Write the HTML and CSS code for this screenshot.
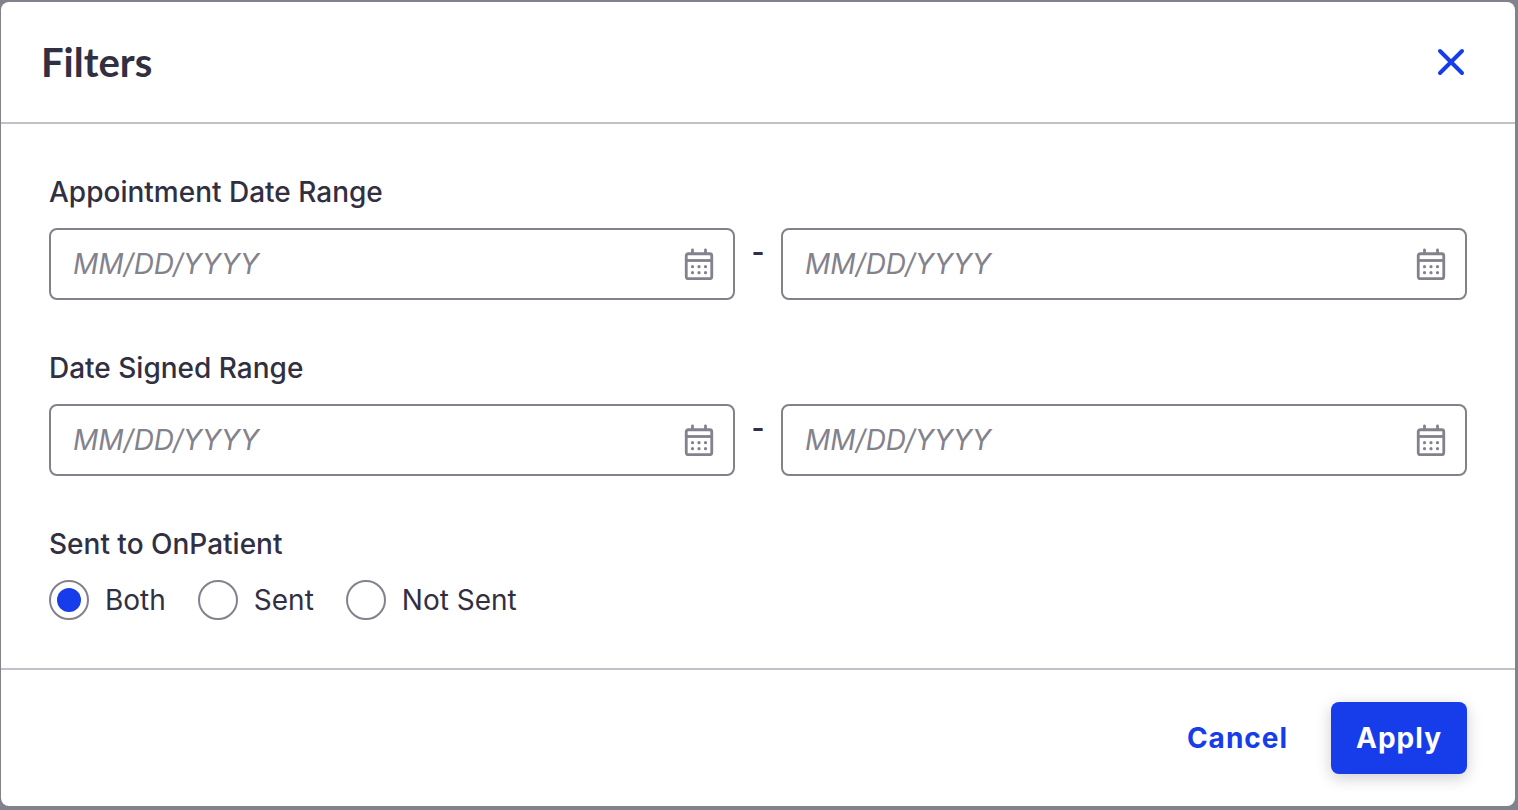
FILE: index.html
```html
<!DOCTYPE html>
<html lang="en">
<head>
    <meta charset="UTF-8">
    <meta name="viewport" content="width=device-width, initial-scale=1">
    <title>Filters</title>
    <link rel="stylesheet" href="styles.css">
</head>
<body>

    <!-- Shared calendar icon -->
    <svg class="sprite" aria-hidden="true">
        <symbol id="icon-calendar" viewBox="0 0 32 32">
            <rect x="3.25" y="5.75" width="25.5" height="25" rx="2" fill="none" stroke="currentColor" stroke-width="2.8"/>
            <path d="M3 12.5h26" fill="none" stroke="currentColor" stroke-width="2.8"/>
            <path d="M9.5 5V1.8M22.5 5V1.8" fill="none" stroke="currentColor" stroke-width="2.8" stroke-linecap="round"/>
            <g fill="currentColor">
                <circle cx="9.5" cy="18.7" r="1.6"/>
                <circle cx="16" cy="18.7" r="1.6"/>
                <circle cx="22.5" cy="18.7" r="1.6"/>
                <circle cx="9.5" cy="24.7" r="1.6"/>
                <circle cx="16" cy="24.7" r="1.6"/>
                <circle cx="22.5" cy="24.7" r="1.6"/>
            </g>
        </symbol>
    </svg>

    <form class="modal" role="dialog" aria-labelledby="modal-title">
        <header class="modal-header">
            <h1 id="modal-title">Filters</h1>
            <button type="button" class="close-button" aria-label="Close">
                <svg viewBox="0 0 32 32" aria-hidden="true">
                    <path d="M5 5l22 22M27 5L5 27" fill="none" stroke="currentColor" stroke-width="4" stroke-linecap="round"/>
                </svg>
            </button>
        </header>

        <main class="modal-body">
            <div class="field">
                <label for="appointment-from">Appointment Date Range</label>
                <div class="date-range">
                    <div class="date-input">
                        <input type="text" id="appointment-from" placeholder="MM/DD/YYYY">
                        <svg aria-hidden="true"><use href="#icon-calendar"/></svg>
                    </div>
                    <span class="dash">-</span>
                    <div class="date-input">
                        <input type="text" id="appointment-to" placeholder="MM/DD/YYYY" aria-label="Appointment date to">
                        <svg aria-hidden="true"><use href="#icon-calendar"/></svg>
                    </div>
                </div>
            </div>

            <div class="field">
                <label for="signed-from">Date Signed Range</label>
                <div class="date-range">
                    <div class="date-input">
                        <input type="text" id="signed-from" placeholder="MM/DD/YYYY">
                        <svg aria-hidden="true"><use href="#icon-calendar"/></svg>
                    </div>
                    <span class="dash">-</span>
                    <div class="date-input">
                        <input type="text" id="signed-to" placeholder="MM/DD/YYYY" aria-label="Date signed to">
                        <svg aria-hidden="true"><use href="#icon-calendar"/></svg>
                    </div>
                </div>
            </div>

            <div class="field" role="radiogroup" aria-labelledby="sent-label">
                <span class="field-label" id="sent-label">Sent to OnPatient</span>
                <div class="radio-group">
                    <label class="radio"><input type="radio" name="sent" value="both" checked>Both</label>
                    <label class="radio"><input type="radio" name="sent" value="sent">Sent</label>
                    <label class="radio"><input type="radio" name="sent" value="not-sent">Not Sent</label>
                </div>
            </div>
        </main>

        <footer class="modal-footer">
            <button type="button" class="button button-text">Cancel</button>
            <button type="submit" class="button button-primary">Apply</button>
        </footer>
    </form>

</body>
</html>
```
FILE: styles.css
```css
:root {
    --primary-color: #173DEA;
    --text-color: #312F42;
    --muted-color: #83828C;
    --line-color: #C1C0C6;
    --backdrop-color: #83818C;
}

* {
    box-sizing: border-box;
}

body {
    margin: 0;
    padding: 2px 3px 4px 1px;
    background-color: var(--backdrop-color);
    color: var(--text-color);
    font-family: Inter, "Liberation Sans", sans-serif;
    font-size: 28px;
    line-height: 40px;
}

button, input {
    font: inherit;
}

.sprite {
    display: none;
}

.modal {
    background-color: #FFFFFF;
    border-radius: 8px;
}

/* Header */
.modal-header {
    display: flex;
    align-items: center;
    justify-content: space-between;
    padding: 36px 48px 36px 40px;
    border-bottom: 2px solid var(--line-color);
}

.modal-header h1 {
    margin: 0;
    font-family: Lato, sans-serif;
    font-size: 40px;
    line-height: 48px;
    font-weight: 700;
}

.close-button {
    display: flex;
    padding: 0;
    border: none;
    background: none;
    color: var(--primary-color);
    cursor: pointer;
}

.close-button svg {
    width: 32px;
    height: 32px;
}

/* Fields */
.modal-body {
    display: flex;
    flex-direction: column;
    gap: 48px;
    padding: 48px;
}

.field {
    display: flex;
    flex-direction: column;
    gap: 16px;
}

.field > label, .field-label {
    font-weight: 500;
}

.date-range {
    display: flex;
}

.date-input {
    display: flex;
    flex: 1;
    align-items: center;
    height: 72px;
    padding: 0 18px 0 22px;
    border: 2px solid var(--muted-color);
    border-radius: 8px;
    color: var(--muted-color);
}

.date-input input {
    flex: 1;
    min-width: 0;
    padding: 0;
    border: none;
    outline: none;
    background: none;
    color: var(--text-color);
}

.date-input input::placeholder {
    color: var(--muted-color);
    font-style: italic;
    opacity: 1;
}

.date-input svg {
    width: 32px;
    height: 32px;
}

.dash {
    width: 46px;
    padding-top: 4px;
    text-align: center;
    font-weight: 600;
}

/* Radio buttons */
.radio-group {
    display: flex;
    gap: 32px;
}

.radio {
    display: flex;
    align-items: center;
    gap: 16px;
}

.radio input {
    appearance: none;
    width: 40px;
    height: 40px;
    margin: 0;
    border: 2px solid var(--muted-color);
    border-radius: 50%;
}

.radio input:checked {
    padding: 6px;
    background-color: var(--primary-color);
    background-clip: content-box;
}

/* Footer */
.modal-footer {
    display: flex;
    justify-content: flex-end;
    gap: 18px;
    padding: 32px 48px;
    border-top: 2px solid var(--line-color);
}

.button {
    padding: 16px 25px;
    border: none;
    border-radius: 8px;
    font-weight: 700;
    letter-spacing: 1px;
    cursor: pointer;
}

.button-text {
    background: none;
    color: var(--primary-color);
}

.button-primary {
    background-color: var(--primary-color);
    color: #FFFFFF;
    box-shadow: 0 4px 16px rgba(0, 0, 0, 0.2);
}
```
